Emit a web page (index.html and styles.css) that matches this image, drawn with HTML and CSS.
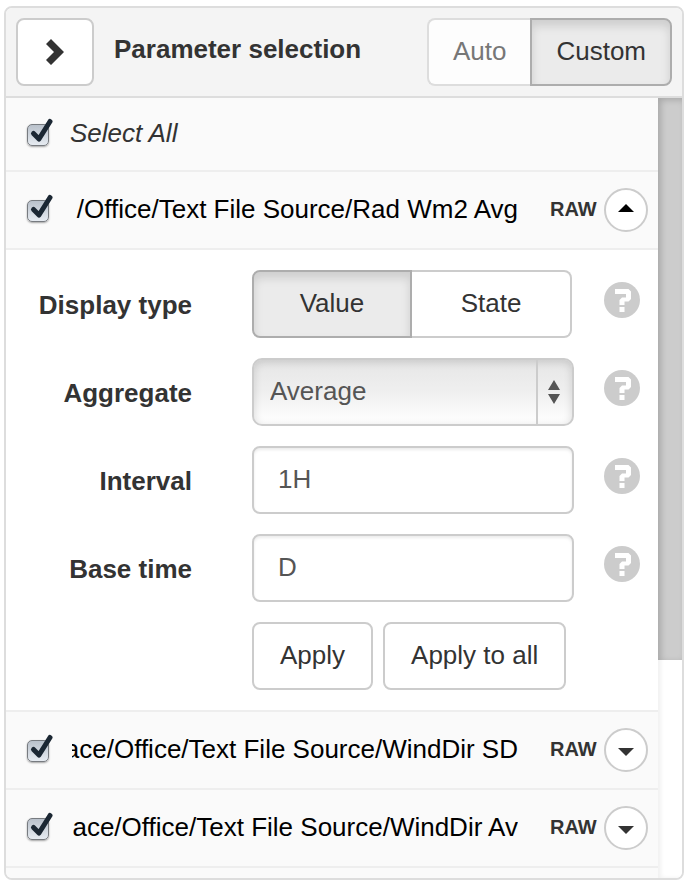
FILE: index.html
```html
<!DOCTYPE html>
<html lang="en">
<head>
<meta charset="utf-8">
<title>Parameter selection</title>
<link rel="stylesheet" href="styles.css">
</head>
<body>
<svg class="sprites" aria-hidden="true">
  <symbol id="tick" viewBox="0 0 28 30"><path d="M7.500 15.500 13 21 24 3.500" fill="none" stroke="#1b2733" stroke-width="5" stroke-linecap="round" stroke-linejoin="round"/></symbol>
  <symbol id="help" viewBox="0 0 36 36"><circle cx="18" cy="18" r="18" fill="#ccc"/><path fill="#fff" d="M11 7H24.500L27 9.500V17L24.500 19.500H20.500V23H15.500V18L18 15.500H22V12H11ZM15.500 25h5v5h-5z"/></symbol>
</svg>
<main class="panel">
  <header class="panel-header">
    <button class="btn btn-back" type="button" aria-label="Back">
      <svg width="18" height="26" viewBox="0 0 18 26"><path d="M0 5 5 0 18 13 5 26 0 21 8 13Z" fill="#333"/></svg>
    </button>
    <h1 class="title">Parameter selection</h1>
    <div class="toggle">
      <button class="btn muted" type="button">Auto</button>
      <button class="btn active" type="button">Custom</button>
    </div>
  </header>
  <div class="panel-body">
    <div class="list">
      <div class="row row-all">
        <span class="check"><input type="checkbox" id="all" checked><svg><use href="#tick"/></svg></span>
        <label class="all-label" for="all">Select All</label>
      </div>
      <div class="row">
        <span class="check"><input type="checkbox" id="p1" checked><svg><use href="#tick"/></svg></span>
        <label class="path" for="p1"><span>/Office/Text File Source/Rad Wm2 Avg</span></label>
        <strong class="raw">RAW</strong>
        <button class="round" type="button" aria-label="Collapse"><svg width="16" height="12" viewBox="0 0 16 12"><path d="M0 8 8 0 16 8Z" fill="#000"/></svg></button>
      </div>
      <form class="settings">
        <span class="label" id="display-label">Display type</span>
        <div class="toggle even" role="group" aria-labelledby="display-label">
          <button class="btn active" type="button">Value</button>
          <button class="btn" type="button">State</button>
        </div>
        <svg class="help"><use href="#help"/></svg>

        <label class="label" for="aggregate">Aggregate</label>
        <div class="select">
          <select id="aggregate"><option>Average</option></select>
          <span class="arrows"><svg width="12" height="24" viewBox="0 0 12 24"><path d="M0 10 6 0 12 10ZM0 14H12L6 24Z" fill="#555"/></svg></span>
        </div>
        <svg class="help"><use href="#help"/></svg>

        <label class="label" for="interval">Interval</label>
        <input class="text" id="interval" type="text" value="1H">
        <svg class="help"><use href="#help"/></svg>

        <label class="label" for="base">Base time</label>
        <input class="text" id="base" type="text" value="D">
        <svg class="help"><use href="#help"/></svg>

        <div class="actions">
          <button class="btn" type="button">Apply</button>
          <button class="btn" type="button">Apply to all</button>
        </div>
      </form>
      <div class="row">
        <span class="check"><input type="checkbox" id="p2" checked><svg><use href="#tick"/></svg></span>
        <label class="path" for="p2"><span>ace/Office/Text File Source/WindDir SD</span></label>
        <strong class="raw">RAW</strong>
        <button class="round" type="button" aria-label="Expand"><svg width="16" height="12" viewBox="0 0 16 12"><path d="M0 4H16L8 12Z" fill="#333"/></svg></button>
      </div>
      <div class="row">
        <span class="check"><input type="checkbox" id="p3" checked><svg><use href="#tick"/></svg></span>
        <label class="path" for="p3"><span>ace/Office/Text File Source/WindDir Av</span></label>
        <strong class="raw">RAW</strong>
        <button class="round" type="button" aria-label="Expand"><svg width="16" height="12" viewBox="0 0 16 12"><path d="M0 4H16L8 12Z" fill="#333"/></svg></button>
      </div>
    </div>
    <div class="scrollbar"><div class="thumb"></div></div>
  </div>
</main>
</body>
</html>
```
FILE: styles.css
```css
* { box-sizing: border-box; }
body {
  margin: 0;
  padding: 6px 2px 6px 4px;
  height: 100vh;
  background: #fff;
  color: #333;
  font: 26px/40px "Liberation Sans", Arial, sans-serif;
}
.sprites { position: absolute; width: 0; height: 0; }
svg { display: block; }
button, input, select { font: inherit; color: inherit; margin: 0; }

.panel {
  display: flex;
  flex-direction: column;
  height: 100%;
  border: 2px solid #ddd;
  border-radius: 8px;
  overflow: hidden;
}
.panel-header {
  display: flex;
  align-items: center;
  padding: 10px;
  border-bottom: 2px solid #ddd;
  background: #f4f4f4;
}
.title {
  flex: 1;
  margin: 0 0 6px 20px;
  font-size: 26px;
  line-height: 40px;
}
.btn {
  padding: 11px 24px 13px;
  border: 2px solid #ccc;
  border-radius: 8px;
  background: #fff;
  line-height: 40px;
  white-space: nowrap;
}
.btn-back {
  display: flex;
  align-items: center;
  justify-content: center;
  width: 78px;
  height: 68px;
  padding: 0;
}
.toggle { display: flex; }
.toggle .btn:first-child { border-top-right-radius: 0; border-bottom-right-radius: 0; }
.toggle .btn:last-child { border-top-left-radius: 0; border-bottom-left-radius: 0; }
.toggle .btn:not(.active):first-child { border-right: 0; }
.toggle .btn:not(.active):last-child { border-left: 0; }
.toggle .btn.active {
  border-color: #adadad;
  background: #ebebeb;
  box-shadow: inset 0 6px 10px rgba(0, 0, 0, 0.125);
}
.btn.muted { border-color: #ddd; background: #fdfdfd; color: #777; }

.panel-body { display: flex; flex: 1; min-height: 0; }
.list { flex: 1; min-width: 0; overflow: hidden; background: #fafafa; }
.row {
  display: flex;
  align-items: center;
  height: 78px;
  padding: 0 10px 0 20px;
  border-bottom: 2px solid #eee;
}
.row-all { height: 74px; }
.row label, .raw { padding-bottom: 2px; }
.check { position: relative; flex: none; width: 28px; height: 32px; padding: 6px 0 0 1px; }
.check input {
  appearance: none;
  display: block;
  width: 22px;
  height: 22px;
  border: 1px solid #777b80;
  border-radius: 5px;
  background: linear-gradient(#b9c1cb, #e6ebf1);
  box-shadow: 0 1px 2px rgba(0, 0, 0, 0.35);
}
.check svg { position: absolute; top: 0; left: 0; width: 28px; height: 30px; pointer-events: none; }
.all-label { margin-left: 16px; font-style: italic; }
.path {
  display: flex;
  justify-content: flex-end;
  flex: 1;
  min-width: 0;
  margin: 0 32px 0 18px;
  overflow: hidden;
  color: #000;
  white-space: nowrap;
}
.raw { width: 46px; font-size: 20px; }
.round {
  display: flex;
  align-items: center;
  justify-content: center;
  width: 44px;
  height: 44px;
  margin-left: 8px;
  padding: 0;
  border: 2px solid #ccc;
  border-radius: 50%;
  background: #fff;
}

.settings {
  display: grid;
  grid-template-columns: 186px 1fr 36px;
  align-items: center;
  row-gap: 20px;
  padding: 20px 18px 20px 0;
  border-bottom: 2px solid #eee;
  background: #fff;
}
.label { padding-top: 2px; font-weight: bold; text-align: right; }
.toggle.even { margin: 0 32px 0 60px; }
.even .btn { flex: 1 1 50%; padding-left: 0; padding-right: 0; }
.select, .text { margin: 0 30px 0 60px; min-width: 0; height: 68px; }
.text {
  padding: 0 24px 2px;
  border: 2px solid #ccc;
  border-radius: 8px;
  background: #fff;
  box-shadow: inset 0 2px 3px rgba(0, 0, 0, 0.08);
  color: #555;
}
.select { position: relative; }
.select select {
  appearance: none;
  width: 100%;
  height: 100%;
  padding: 0 50px 2px 16px;
  border: 2px solid #ccc;
  border-radius: 10px;
  background: linear-gradient(#e6e6e6, #efefef 50%, #fff);
  box-shadow: inset 0 2px 8px rgba(0, 0, 0, 0.14);
  color: #555;
}
.arrows {
  position: absolute;
  top: 2px;
  right: 2px;
  bottom: 2px;
  display: flex;
  align-items: center;
  width: 36px;
  padding-left: 10px;
  border-left: 2px solid #ccc;
  pointer-events: none;
}
.help { width: 36px; height: 36px; margin-bottom: 8px; }
.actions { grid-column: 1 / -1; display: flex; gap: 10px; margin-left: 246px; }
.actions .btn { padding-left: 26px; padding-right: 26px; }

.scrollbar { width: 24px; background: #fff; box-shadow: inset 3px 0 4px rgba(0, 0, 0, 0.06); }
.thumb {
  height: 72%;
  background: #ccc;
  box-shadow: inset 3px 2px 6px rgba(0, 0, 0, 0.18);
}
```
